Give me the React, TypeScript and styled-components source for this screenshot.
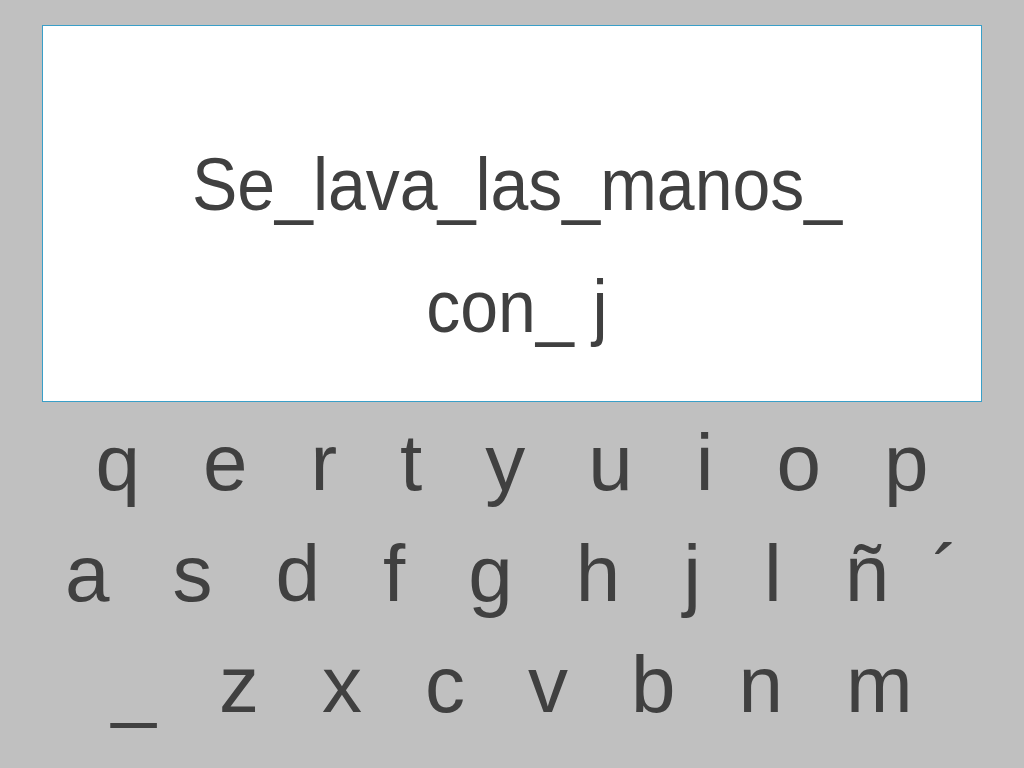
import styled, { createGlobalStyle } from "styled-components";

const GlobalStyle = createGlobalStyle`
  html, body {
    margin: 0;
    padding: 0;
    background: #c0c0c0;
  }
  body {
    font-family: "Liberation Sans", Arial, Helvetica, sans-serif;
    color: #404040;
  }
`;

const rows = [
  ["q", "e", "r", "t", "y", "u", "i", "o", "p"],
  ["a", "s", "d", "f", "g", "h", "j", "l", "ñ", "´"],
  ["_", "z", "x", "c", "v", "b", "n", "m"],
];

const Page = styled.main`
  width: 1024px;
  height: 768px;
  padding-top: 25px;
  box-sizing: border-box;
  display: flex;
  flex-direction: column;
  align-items: center;
  overflow: hidden;
`;

const Display = styled.section`
  width: 940px;
  height: 377px;
  box-sizing: border-box;
  background: #ffffff;
  border: 1px solid #3a9fc8;
  padding: 97px 0 0 10px;
  display: flex;
  flex-direction: column;
  align-items: center;
`;

// the typed text is drawn slightly taller than wide in the original
const Line = styled.div`
  font-size: 68px;
  line-height: 122px;
  white-space: pre;
  transform: scaleY(1.09);
`;

const Keyboard = styled.div`
  margin-top: 5px;
  display: flex;
  flex-direction: column;
  align-items: center;
`;

const Row = styled.div`
  display: flex;
  gap: 63px;
  font-size: 80px;
  line-height: 111px;
`;

const Key = styled.span<{ $accent?: boolean }>`
  cursor: pointer;
  margin-left: ${p => (p.$accent ? "-20px" : "0")};
`;

const App = () => {
  return (
    <>
      <GlobalStyle />
      <Page>
        <Display>
          <Line>Se_lava_las_manos_</Line>
          <Line>con_ j</Line>
        </Display>
        <Keyboard>
          {rows.map((row, i) => (
            <Row key={i}>
              {row.map(letter => (
                <Key key={letter} $accent={letter === "´"}>
                  {letter}
                </Key>
              ))}
            </Row>
          ))}
        </Keyboard>
      </Page>
    </>
  );
};

export default App;
